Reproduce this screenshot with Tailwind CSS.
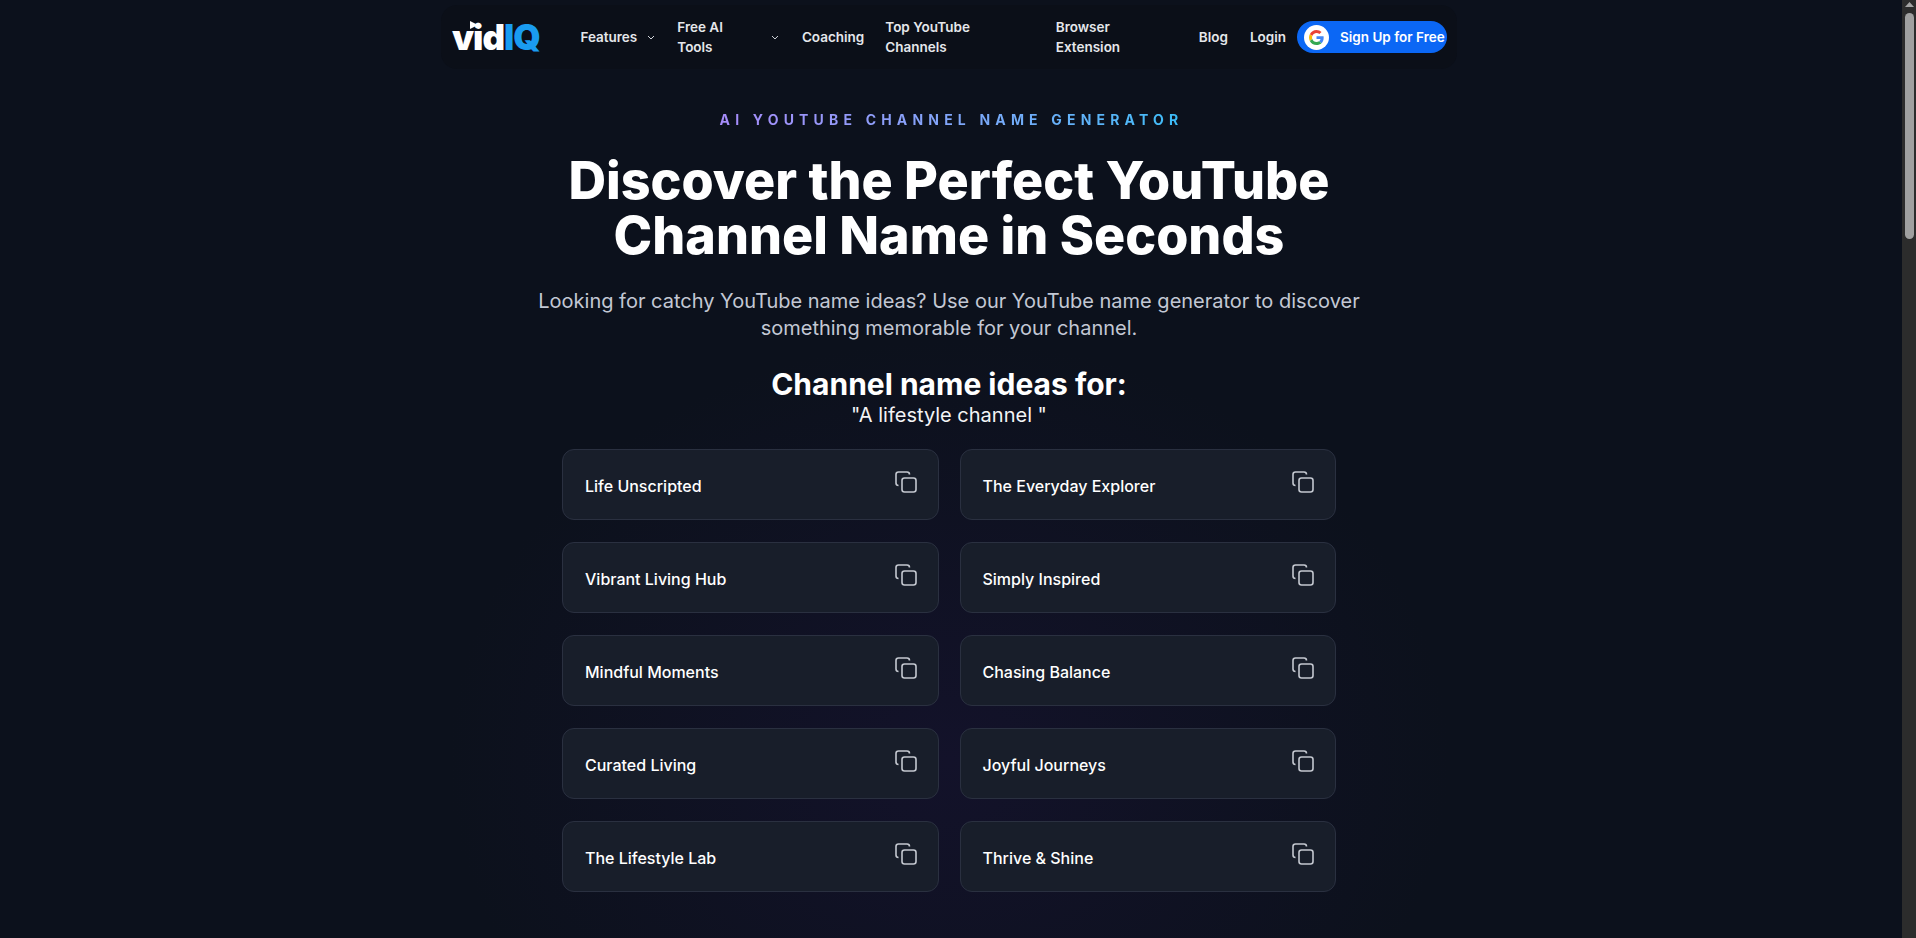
<!doctype html>
<html lang="en">
<head>
<meta charset="utf-8">
<title>AI YouTube Channel Name Generator</title>
<script src="https://cdn.jsdelivr.net/npm/@tailwindcss/browser@4"></script>
</head>
<body class="bg-[#0c111c] font-['Inter',sans-serif] text-white overflow-hidden">
<div class="flex h-[938px] overflow-hidden">
	<div class="relative w-[1902px] h-[938px] overflow-hidden bg-[radial-gradient(ellipse_500px_420px_at_949px_760px,#13122a_0%,#0c111c_100%)]">
		<div class="w-[1898px] flex flex-col items-center">

			<!-- nav -->
			<nav class="w-[1016px] h-[64px] mt-[5px] px-[11px] pr-[10px] flex items-center bg-[#0b0f18] rounded-2xl text-[13.5px] font-semibold text-[#e5e7eb]">
				<div class="relative w-[90px] h-[40px] mr-[39px] font-black text-[35px] leading-[40px] tracking-[-1px] whitespace-nowrap">
					<span class="text-white">vid</span><span class="text-[#1a9cf0]">IQ</span>
					<svg class="absolute left-[18px] top-[4px]" width="9" height="8" viewBox="0 0 9 8"><path d="M0 0 L8 4 L0 8 Z" fill="#fff"/></svg>
				</div>
				<a class="flex items-center">Features
					<svg class="ml-[10px]" width="8" height="5" viewBox="0 0 8 5" fill="none" stroke="#d1d5db" stroke-width="1"><path d="M1 1 L4 4 L7 1"/></svg>
				</a>
				<a class="flex items-center ml-[22px]">Free AI Tools
					<svg class="ml-[10px]" width="8" height="5" viewBox="0 0 8 5" fill="none" stroke="#d1d5db" stroke-width="1"><path d="M1 1 L4 4 L7 1"/></svg>
				</a>
				<a class="ml-[23px]">Coaching</a>
				<a class="ml-[21px]">Top YouTube Channels</a>
				<a class="ml-[22px]">Browser Extension</a>
				<a class="ml-[22px]">Blog</a>
				<a class="ml-[22px] mt-[1px]">Login</a>
				<a class="ml-[11px] h-[32px] w-[151px] rounded-full bg-[#0b67f5] flex items-center pl-[7px] text-white">
					<span class="w-[25px] h-[25px] rounded-full bg-white flex items-center justify-center">
						<svg width="15" height="15" viewBox="0 0 48 48">
							<path fill="#EA4335" d="M24 9.5c3.5 0 6.7 1.2 9.2 3.6l6.9-6.9C35.9 2.4 30.5 0 24 0 14.6 0 6.5 5.4 2.6 13.2l8 6.2C12.5 13.7 17.800 9.500 24 9.500z"/>
							<path fill="#4285F4" d="M46.900 24.500c0-1.600-.1-3.100-.4-4.500H24v9h12.900c-.6 3-2.200 5.500-4.700 7.200l7.700 6c4.500-4.200 7-10.300 7-17.700z"/>
							<path fill="#FBBC05" d="M10.500 28.600c-.5-1.400-.8-3-.8-4.600s.3-3.200.8-4.600l-8-6.200C.9 16.500 0 20.100 0 24s.9 7.500 2.600 10.800l7.900-6.200z"/>
							<path fill="#34A853" d="M24 48c6.500 0 11.900-2.100 15.900-5.800l-7.700-6c-2.200 1.400-4.900 2.300-8.200 2.300-6.200 0-11.500-4.200-13.400-9.900l-8 6.200C6.500 42.600 14.600 48 24 48z"/>
						</svg>
					</span>
					<span class="ml-[11px]">Sign Up for Free</span>
				</a>
			</nav>

			<!-- hero -->
			<p class="mt-[42px] text-[14px] leading-[18px] font-bold tracking-[0.37em] pl-[5px] bg-gradient-to-r from-[#a78bfa] to-[#38bdf8] bg-clip-text text-transparent">AI YOUTUBE CHANNEL NAME GENERATOR</p>
			<h1 class="mt-[24px] text-[52px] leading-[55px] font-extrabold text-center">Discover the Perfect YouTube<br>Channel Name in Seconds</h1>
			<p class="mt-[25px] text-[20px] leading-[27px] text-center text-[#c3c8d4]">Looking for catchy YouTube name ideas? Use our YouTube name generator to discover<br>something memorable for your channel.</p>
			<h2 class="mt-[24px] text-[30px] leading-[36px] font-bold text-center">Channel name ideas for:</h2>
			<p class="text-[20px] leading-[26px] text-center text-[#f3f4f6]">"A lifestyle channel "</p>

			<!-- results -->
			<div class="mt-[21px] grid grid-cols-2 gap-x-[21px] gap-y-[22px] w-[774px]">
				<div class="h-[71px] rounded-xl border border-[#2a3040] bg-[#181e2a] pl-[22px] pr-[21px] flex justify-between text-[16px] font-medium"><span class="mt-[24px] leading-[24px]">Life Unscripted</span><svg class="mt-[21px]" width="22" height="22" viewBox="0 0 22 22" fill="none" stroke="#c4c8d0" stroke-width="1.600"><rect x="7" y="7" width="14" height="14" rx="2.500"/><path d="M3.500 14.500 C2 14.500 1 13.500 1 12 V3.500 C1 2 2 1 3.500 1 H12 C13.500 1 14.500 2 14.500 3.500"/></svg></div>
				<div class="h-[71px] rounded-xl border border-[#2a3040] bg-[#181e2a] pl-[22px] pr-[21px] flex justify-between text-[16px] font-medium"><span class="mt-[24px] leading-[24px]">The Everyday Explorer</span><svg class="mt-[21px]" width="22" height="22" viewBox="0 0 22 22" fill="none" stroke="#c4c8d0" stroke-width="1.600"><rect x="7" y="7" width="14" height="14" rx="2.500"/><path d="M3.500 14.500 C2 14.500 1 13.500 1 12 V3.500 C1 2 2 1 3.500 1 H12 C13.500 1 14.500 2 14.500 3.500"/></svg></div>
				<div class="h-[71px] rounded-xl border border-[#2a3040] bg-[#181e2a] pl-[22px] pr-[21px] flex justify-between text-[16px] font-medium"><span class="mt-[24px] leading-[24px]">Vibrant Living Hub</span><svg class="mt-[21px]" width="22" height="22" viewBox="0 0 22 22" fill="none" stroke="#c4c8d0" stroke-width="1.600"><rect x="7" y="7" width="14" height="14" rx="2.500"/><path d="M3.500 14.500 C2 14.500 1 13.500 1 12 V3.500 C1 2 2 1 3.500 1 H12 C13.500 1 14.500 2 14.500 3.500"/></svg></div>
				<div class="h-[71px] rounded-xl border border-[#2a3040] bg-[#181e2a] pl-[22px] pr-[21px] flex justify-between text-[16px] font-medium"><span class="mt-[24px] leading-[24px]">Simply Inspired</span><svg class="mt-[21px]" width="22" height="22" viewBox="0 0 22 22" fill="none" stroke="#c4c8d0" stroke-width="1.600"><rect x="7" y="7" width="14" height="14" rx="2.500"/><path d="M3.500 14.500 C2 14.500 1 13.500 1 12 V3.500 C1 2 2 1 3.500 1 H12 C13.500 1 14.500 2 14.500 3.500"/></svg></div>
				<div class="h-[71px] rounded-xl border border-[#2a3040] bg-[#181e2a] pl-[22px] pr-[21px] flex justify-between text-[16px] font-medium"><span class="mt-[24px] leading-[24px]">Mindful Moments</span><svg class="mt-[21px]" width="22" height="22" viewBox="0 0 22 22" fill="none" stroke="#c4c8d0" stroke-width="1.600"><rect x="7" y="7" width="14" height="14" rx="2.500"/><path d="M3.500 14.500 C2 14.500 1 13.500 1 12 V3.500 C1 2 2 1 3.500 1 H12 C13.500 1 14.500 2 14.500 3.500"/></svg></div>
				<div class="h-[71px] rounded-xl border border-[#2a3040] bg-[#181e2a] pl-[22px] pr-[21px] flex justify-between text-[16px] font-medium"><span class="mt-[24px] leading-[24px]">Chasing Balance</span><svg class="mt-[21px]" width="22" height="22" viewBox="0 0 22 22" fill="none" stroke="#c4c8d0" stroke-width="1.600"><rect x="7" y="7" width="14" height="14" rx="2.500"/><path d="M3.500 14.500 C2 14.500 1 13.500 1 12 V3.500 C1 2 2 1 3.500 1 H12 C13.500 1 14.500 2 14.500 3.500"/></svg></div>
				<div class="h-[71px] rounded-xl border border-[#2a3040] bg-[#181e2a] pl-[22px] pr-[21px] flex justify-between text-[16px] font-medium"><span class="mt-[24px] leading-[24px]">Curated Living</span><svg class="mt-[21px]" width="22" height="22" viewBox="0 0 22 22" fill="none" stroke="#c4c8d0" stroke-width="1.600"><rect x="7" y="7" width="14" height="14" rx="2.500"/><path d="M3.500 14.500 C2 14.500 1 13.500 1 12 V3.500 C1 2 2 1 3.500 1 H12 C13.500 1 14.500 2 14.500 3.500"/></svg></div>
				<div class="h-[71px] rounded-xl border border-[#2a3040] bg-[#181e2a] pl-[22px] pr-[21px] flex justify-between text-[16px] font-medium"><span class="mt-[24px] leading-[24px]">Joyful Journeys</span><svg class="mt-[21px]" width="22" height="22" viewBox="0 0 22 22" fill="none" stroke="#c4c8d0" stroke-width="1.600"><rect x="7" y="7" width="14" height="14" rx="2.500"/><path d="M3.500 14.500 C2 14.500 1 13.500 1 12 V3.500 C1 2 2 1 3.500 1 H12 C13.500 1 14.500 2 14.500 3.500"/></svg></div>
				<div class="h-[71px] rounded-xl border border-[#2a3040] bg-[#181e2a] pl-[22px] pr-[21px] flex justify-between text-[16px] font-medium"><span class="mt-[24px] leading-[24px]">The Lifestyle Lab</span><svg class="mt-[21px]" width="22" height="22" viewBox="0 0 22 22" fill="none" stroke="#c4c8d0" stroke-width="1.600"><rect x="7" y="7" width="14" height="14" rx="2.500"/><path d="M3.500 14.500 C2 14.500 1 13.500 1 12 V3.500 C1 2 2 1 3.500 1 H12 C13.500 1 14.500 2 14.500 3.500"/></svg></div>
				<div class="h-[71px] rounded-xl border border-[#2a3040] bg-[#181e2a] pl-[22px] pr-[21px] flex justify-between text-[16px] font-medium"><span class="mt-[24px] leading-[24px]">Thrive &amp; Shine</span><svg class="mt-[21px]" width="22" height="22" viewBox="0 0 22 22" fill="none" stroke="#c4c8d0" stroke-width="1.600"><rect x="7" y="7" width="14" height="14" rx="2.500"/><path d="M3.500 14.500 C2 14.500 1 13.500 1 12 V3.500 C1 2 2 1 3.500 1 H12 C13.500 1 14.500 2 14.500 3.500"/></svg></div>
			</div>
		</div>
	</div>

	<!-- scrollbar -->
	<div class="w-[14px] h-[938px] bg-[#2c2c2c] flex flex-col items-center">
		<svg class="mt-[2px]" width="9" height="5" viewBox="0 0 9 5"><path d="M4.500 0 L9 5 H0 Z" fill="#a3a3a3"/></svg>
		<div class="mt-[6px] w-[9px] h-[226px] rounded-full bg-[#a0a0a0]"></div>
	</div>
</div>
</body>
</html>
